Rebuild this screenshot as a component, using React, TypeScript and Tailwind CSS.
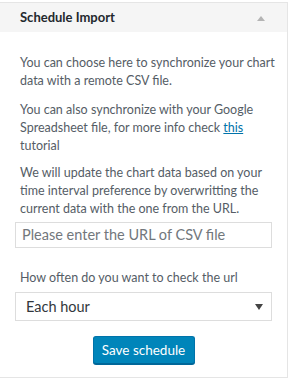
import React from "react";

export default function App() {
  const font = { fontFamily: 'Lato, "Noto Sans", sans-serif' };
  return (
    <div className="w-[290px] h-[382px] bg-white overflow-hidden" style={font}>
      <div className="mt-[2px] w-[288px] border-t border-r border-b border-[#e5e5e5] bg-white">
        <div className="h-[29px] bg-[#f5f5f5] flex items-center justify-between pl-[20px] pr-[22px]">
          <span className="text-[13px] font-bold text-[#23282d]">Schedule Import</span>
          <svg width="8" height="5" viewBox="0 0 8 5" className="mt-[1px]">
            <polygon points="4,0 8,5 0,5" fill="#b4b4b4" />
          </svg>
        </div>
        <div className="pt-[22px] pb-[13px] text-[12.5px] leading-[18px] text-[#555d66]">
          <p className="pl-[20px] pr-[10px]">You can choose here to synchronize your chart data with a remote CSV file.</p>
          <p className="pl-[20px] pr-[10px] mt-[11px]">
            You can also synchronize with your Google Spreadsheet file, for more info check{" "}
            <a className="text-[#0073aa] underline">this</a> tutorial
          </p>
          <p className="pl-[20px] pr-[10px] mt-[9px]">
            We will update the chart data based on your time interval preference by overwritting the current data with the one from the URL.
          </p>
          <div className="px-[15px] mt-[4px]">
            <div className="h-[26px] w-[257px] border border-[#dddddd] bg-white flex items-center px-[6px] text-[14.5px] text-[#72777c]">
              Please enter the URL of CSV file
            </div>
          </div>
          <p className="pl-[20px] pr-[10px] mt-[21px]">How often do you want to check the url</p>
          <div className="px-[15px] mt-[5px]">
            <div className="h-[29px] w-[257px] border border-[#dddddd] bg-white flex items-center justify-between pl-[10px] pr-[8px] text-[14.5px] text-[#32373c]">
              <span>Each hour</span>
              <svg width="8" height="6" viewBox="0 0 8 6">
                <polygon points="0,0 8,0 4,6" fill="#444" />
              </svg>
            </div>
          </div>
          <div className="flex justify-center mt-[15px]">
            <div className="h-[28px] w-[102px] rounded-[3px] bg-[#0085ba] border border-[#0073aa] border-b-[#006799] shadow-[0_1px_0_#006799] flex items-center justify-center text-[13.5px] text-white">
              Save schedule
            </div>
          </div>
        </div>
      </div>
    </div>
  );
}
